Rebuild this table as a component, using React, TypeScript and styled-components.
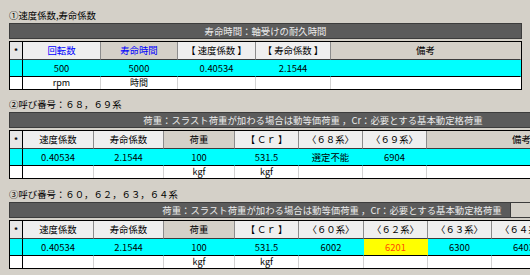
import React from 'react';
import styled, { createGlobalStyle } from 'styled-components';

const Global = createGlobalStyle`
  html, body { margin: 0; padding: 0; background: #d4d0c8; overflow: hidden; }
  body {
    font-family: "Noto Sans CJK JP", "Noto Sans", sans-serif;
    font-size: 9.4px;
    color: #000;
  }
`;

const Page = styled.div`
  width: 530px;
  height: 275px;
  overflow: hidden;
  box-sizing: border-box;
  padding: 7px 0 0 9px;
  display: flex;
  flex-direction: column;
`;

const Section = styled.section<{ $top: number }>`
  display: flex;
  flex-direction: column;
  align-items: flex-start;
  margin-top: ${(p) => p.$top}px;
`;

const Heading = styled.div`
  height: 16px;
  line-height: 16px;
  white-space: nowrap;
`;

const Bar = styled.div<{ $width: number; $fillTo?: number }>`
  box-sizing: border-box;
  width: ${(p) => p.$width}px;
  height: 16px;
  border: 1px solid #3c3c3c;
  background: ${(p) =>
    p.$fillTo
      ? `linear-gradient(to right, #5b5b5b 0 ${p.$fillTo}px, #3c3c3c ${p.$fillTo}px ${p.$fillTo + 1}px, #d4d0c8 ${p.$fillTo + 1}px)`
      : '#5b5b5b'};
  color: #ececec;
  text-align: center;
  line-height: 14px;
  white-space: nowrap;
  margin-bottom: 2px;
`;

const Grid = styled.div<{ $cols: number[] }>`
  display: grid;
  grid-template-columns: ${(p) => p.$cols.map((c) => `${c}px`).join(' ')};
  border: 1px solid #000;
  background: #fff;
  & > :nth-child(${(p) => p.$cols.length}n) { border-right-color: transparent; }
  & > :nth-child(${(p) => p.$cols.length}n + 1) { border-right-color: #000; }
`;

const Cell = styled.div`
  box-sizing: border-box;
  border-right: 1px solid transparent;
  text-align: center;
  white-space: nowrap;
  overflow: hidden;
`;

const HeadCell = styled(Cell)<{ $dark?: boolean; $blue?: boolean }>`
  height: 18px;
  line-height: 17px;
  background: ${(p) => (p.$dark ? '#d4d0c8' : '#efefef')};
  color: ${(p) => (p.$blue ? '#0000ff' : '#000')};
  border-right-color: #8c8c8c;
  border-bottom: 1px solid #3c3c3c;
`;

const MarkCell = styled(HeadCell)`
  background: #e6e6e6;
  font-weight: bold;
  font-size: 8px;
`;

const ValueCell = styled(Cell)<{ $warn?: boolean }>`
  height: 17px;
  line-height: 16px;
  background: ${(p) => (p.$warn ? '#ffff00' : '#00ffff')};
  color: ${(p) => (p.$warn ? '#ff4a00' : '#000')};
  border-bottom: 1px solid #000;
`;

const UnitCell = styled(Cell)`
  height: 12px;
  line-height: 12px;
  font-size: 9px;
  background: #fff;
  border-right-color: #d2d2d2;
`;

type Head = { text: string; dark?: boolean; blue?: boolean };
type Val = { text: string; warn?: boolean };

type TableProps = { cols: number[]; heads: Head[]; values: Val[]; units: string[] };

function DataTable({ cols, heads, values, units }: TableProps) {
  return (
    <Grid $cols={cols}>
      <MarkCell>*</MarkCell>
      {heads.map((h, i) => (
        <HeadCell key={`h${i}`} $dark={h.dark} $blue={h.blue}>
          {h.text}
        </HeadCell>
      ))}
      <ValueCell />
      {values.map((v, i) => (
        <ValueCell key={`v${i}`} $warn={v.warn}>
          {v.text}
        </ValueCell>
      ))}
      <UnitCell />
      {units.map((u, i) => (
        <UnitCell key={`u${i}`}>{u}</UnitCell>
      ))}
    </Grid>
  );
}

const loadNote = '荷重：スラスト荷重が加わる場合は動等価荷重 ，Cr：必要とする基本動定格荷重';

export default function App() {
  return (
    <>
      <Global />
      <Page>
        <Section $top={0}>
          <Heading>①速度係数,寿命係数</Heading>
          <Bar $width={513}>寿命時間：軸受けの耐久時間</Bar>
          <DataTable
            cols={[13, 78, 77, 78, 75, 190]}
            heads={[
              { text: '回転数', blue: true },
              { text: '寿命時間', blue: true, dark: true },
              { text: '【 速度係数 】' },
              { text: '【 寿命係数 】' },
              { text: '備考', dark: true },
            ]}
            values={[{ text: '500' }, { text: '5000' }, { text: '0.40534' }, { text: '2.1544' }, { text: '' }]}
            units={['rpm', '時間', '', '', '']}
          />
        </Section>
        <Section $top={6}>
          <Heading>②呼び番号：６８，６９系</Heading>
          <Bar $width={608}>{loadNote}</Bar>
          <DataTable
            cols={[13, 71, 70, 71, 64, 64, 64, 190]}
            heads={[
              { text: '速度係数' },
              { text: '寿命係数' },
              { text: '荷重', dark: true },
              { text: '【 Ｃｒ 】' },
              { text: '〈６８系〉' },
              { text: '〈６９系〉' },
              { text: '備考', dark: true },
            ]}
            values={[
              { text: '0.40534' },
              { text: '2.1544' },
              { text: '100' },
              { text: '531.5' },
              { text: '選定不能' },
              { text: '6904' },
              { text: '' },
            ]}
            units={['', '', 'kgf', 'kgf', '', '', '']}
          />
        </Section>
        <Section $top={7}>
          <Heading>③呼び番号：６０，６２，６３，６４系</Heading>
          <Bar $width={646} $fillTo={500}>{loadNote}</Bar>
          <DataTable
            cols={[13, 71, 70, 71, 64, 65, 64, 64, 64, 98]}
            heads={[
              { text: '速度係数' },
              { text: '寿命係数' },
              { text: '荷重', dark: true },
              { text: '【 Ｃｒ 】' },
              { text: '〈６０系〉' },
              { text: '〈６２系〉' },
              { text: '〈６３系〉' },
              { text: '〈６４系〉' },
              { text: '備考', dark: true },
            ]}
            values={[
              { text: '0.40534' },
              { text: '2.1544' },
              { text: '100' },
              { text: '531.5' },
              { text: '6002' },
              { text: '6201', warn: true },
              { text: '6300' },
              { text: '6403' },
              { text: '' },
            ]}
            units={['', '', 'kgf', 'kgf', '', '', '', '', '']}
          />
        </Section>
      </Page>
    </>
  );
}
